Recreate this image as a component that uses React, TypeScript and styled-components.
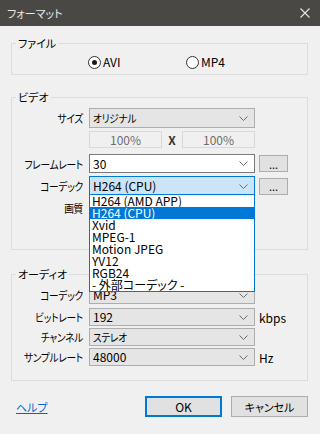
import * as React from "react";
import styled, { createGlobalStyle } from "styled-components";

const GlobalStyle = createGlobalStyle`
  html, body {
    margin: 0;
    padding: 0;
    background: #f0f0f0;
  }
  body {
    font-family: "Noto Sans CJK JP", "Noto Sans", sans-serif;
    font-size: 12px;
    font-feature-settings: "palt";
    color: #000;
  }
`;

const codecs = [
  "H264 (AMD APP)",
  "H264 (CPU)",
  "Xvid",
  "MPEG-1",
  "Motion JPEG",
  "YV12",
  "RGB24",
  "- 外部コーデック -",
];

const Chevron = () => (
  <svg width="9" height="5" viewBox="0 0 9 5">
    <path d="M0.5 0.5 L4.5 4.5 L8.5 0.5" fill="none" stroke="#6a6a6a" strokeWidth="1" />
  </svg>
);

interface ComboProps {
  value: string;
  variant?: "list" | "edit" | "focus";
  jp?: boolean;
  withList?: boolean;
}

function Combo(props: ComboProps) {
  return (
    <ComboBox $variant={props.variant || "list"}>
      <ComboText $jp={props.jp}>{props.value}</ComboText>
      <Chevron />
      {props.withList && (
        <DropList>
          {codecs.map((c) => (
            <DropItem key={c} $selected={c === "H264 (CPU)"}>
              {c}
            </DropItem>
          ))}
        </DropList>
      )}
    </ComboBox>
  );
}

export default function App() {
  return (
    <>
      <GlobalStyle />
      <Window>
        <TitleBar>
          <span>フォーマット</span>
          <svg width="10" height="10" viewBox="0 0 10 10">
            <path d="M0.5 0.5 L9.5 9.5 M9.5 0.5 L0.5 9.5" stroke="#e6e6e6" strokeWidth="1.1" />
          </svg>
        </TitleBar>
        <Body>
          <Group $pt={5} $pb={5}>
            <Legend>ファイル</Legend>
            <RadioRow>
              <Radio>
                <RadioCircle $checked />
                AVI
              </Radio>
              <Radio>
                <RadioCircle />
                MP4
              </Radio>
            </RadioRow>
          </Group>

          <Group $pt={4} $pb={0} $mt={15}>
            <Legend>ビデオ</Legend>
            <Row $h={20}>
              <Label>サイズ</Label>
              <Combo value="オリジナル" jp />
            </Row>
            <Row $h={17} $mt={3}>
              <Label />
              <PercentBox>100%</PercentBox>
              <Times>X</Times>
              <PercentBox>100%</PercentBox>
            </Row>
            <Row $h={19} $mt={6}>
              <Label>フレームレート</Label>
              <Combo value="30" variant="edit" />
              <DotsButton>...</DotsButton>
            </Row>
            <Row $h={20} $mt={3} $top>
              <Label>コーデック</Label>
              <Combo value="H264 (CPU)" variant="focus" withList />
              <DotsButton>...</DotsButton>
            </Row>
            <QualityRow>
              <Label>画質</Label>
            </QualityRow>
          </Group>

          <Group $pt={5} $pb={14} $mt={17}>
            <Legend>オーディオ</Legend>
            <Row $h={18}>
              <Label>コーデック</Label>
              <Combo value="MP3" />
            </Row>
            <Row $h={18} $mt={4}>
              <Label>ビットレート</Label>
              <Combo value="192" />
              <Unit>kbps</Unit>
            </Row>
            <Row $h={18} $mt={2}>
              <Label>チャンネル</Label>
              <Combo value="ステレオ" jp />
            </Row>
            <Row $h={18} $mt={2}>
              <Label>サンプルレート</Label>
              <Combo value="48000" />
              <Unit>Hz</Unit>
            </Row>
          </Group>

          <Footer>
            <HelpLink href="#">ヘルプ</HelpLink>
            <Buttons>
              <Button $primary>OK</Button>
              <Button $jp>キャンセル</Button>
            </Buttons>
          </Footer>
        </Body>
      </Window>
    </>
  );
}

const Window = styled.div`
  width: 320px;
  height: 434px;
  display: flex;
  flex-direction: column;
  background: #f0f0f0;
  overflow: hidden;
`;

const TitleBar = styled.div`
  height: 26px;
  flex: none;
  display: flex;
  align-items: center;
  justify-content: space-between;
  padding: 0 10px 0 7px;
  background: #4a4845;
  color: #e8e8e8;
  font-size: 11px;
  line-height: 14px;
`;

const Body = styled.div`
  padding: 10px 12px 0 11px;
  display: flex;
  flex-direction: column;
`;

const Group = styled.fieldset<{ $pt: number; $pb: number; $mt?: number }>`
  margin: ${(p) => p.$mt || 0}px 0 0 0;
  padding: ${(p) => p.$pt}px 0 ${(p) => p.$pb}px 0;
  border: 1px solid #dcdcdc;
  min-width: 0;
`;

const Legend = styled.legend`
  margin-left: 4px;
  padding: 0 2px;
  line-height: 14px;
  font-size: 11px;
`;

const RadioRow = styled.div`
  display: flex;
  align-items: center;
  height: 14px;
  padding-left: 76px;
`;

const Radio = styled.label`
  display: flex;
  align-items: center;
  gap: 2px;
  width: 98px;
  line-height: 14px;
`;

const RadioCircle = styled.span<{ $checked?: boolean }>`
  box-sizing: border-box;
  width: 13px;
  height: 13px;
  border: 1px solid #333;
  border-radius: 50%;
  background: #fff;
  display: flex;
  align-items: center;
  justify-content: center;
  &::after {
    content: "";
    width: 5px;
    height: 5px;
    border-radius: 50%;
    background: ${(p) => (p.$checked ? "#1a1a1a" : "transparent")};
  }
`;

const Row = styled.div<{ $h: number; $mt?: number; $top?: boolean }>`
  display: flex;
  align-items: center;
  height: ${(p) => p.$h}px;
  margin-top: ${(p) => p.$mt || 0}px;
  position: relative;
  z-index: ${(p) => (p.$top ? 2 : 1)};
`;

const Label = styled.span`
  flex: none;
  width: 71px;
  margin-right: 6px;
  display: flex;
  justify-content: flex-end;
  white-space: nowrap;
  font-size: 11px;
  letter-spacing: -0.3px;
  line-height: 14px;
  transform: scaleX(0.88);
  transform-origin: right center;
`;

const ComboBox = styled.div<{ $variant: "list" | "edit" | "focus" }>`
  position: relative;
  box-sizing: border-box;
  width: 166px;
  height: 100%;
  display: flex;
  align-items: center;
  padding: 0 6px 0 3px;
  border: 1px solid
    ${(p) => (p.$variant === "focus" ? "#0078d7" : p.$variant === "edit" ? "#7a7a7a" : "#adadad")};
  background: ${(p) => (p.$variant === "focus" ? "#cce4f7" : p.$variant === "edit" ? "#fff" : "#e5e5e5")};
`;

const ComboText = styled.span<{ $jp?: boolean }>`
  flex: 1;
  font-size: ${(p) => (p.$jp ? 11 : 12)}px;
  letter-spacing: ${(p) => (p.$jp ? "-0.3px" : "0")};
  line-height: 14px;
  white-space: nowrap;
  transform: ${(p) => (p.$jp ? "scaleX(0.88)" : "none")};
  transform-origin: left center;
`;

const DropList = styled.div`
  position: absolute;
  left: -1px;
  right: -1px;
  top: 100%;
  margin-top: -1px;
  box-sizing: border-box;
  border: 1px solid #0078d7;
  background: #fff;
  display: flex;
  flex-direction: column;
`;

const DropItem = styled.div<{ $selected?: boolean }>`
  height: 12px;
  line-height: 12px;
  padding-left: 2px;
  white-space: nowrap;
  background: ${(p) => (p.$selected ? "#0078d7" : "transparent")};
  color: ${(p) => (p.$selected ? "#fff" : "#000")};
`;

const PercentBox = styled.div`
  box-sizing: border-box;
  width: 73px;
  height: 100%;
  display: flex;
  align-items: center;
  justify-content: center;
  border: 1px solid #d9d9d9;
  background: #f0f0f0;
  color: #6d6d6d;
`;

const Times = styled.span`
  width: 20px;
  text-align: center;
  font-weight: bold;
  color: #333;
`;

const DotsButton = styled.div`
  box-sizing: border-box;
  width: 29px;
  height: 17px;
  margin-left: 4px;
  display: flex;
  align-items: center;
  justify-content: center;
  border: 1px solid #adadad;
  background: #e1e1e1;
  font-size: 11px;
  line-height: 10px;
`;

const QualityRow = styled.div`
  height: 48px;
  padding-top: 5px;
  display: flex;
  align-items: flex-start;
`;

const Unit = styled.span`
  margin-left: 4px;
`;

const Footer = styled.div`
  margin-top: 15px;
  display: flex;
  align-items: center;
  justify-content: space-between;
  padding-left: 5px;
`;

const HelpLink = styled.a`
  color: #0066cc;
  font-size: 11px;
  text-decoration: underline;
`;

const Buttons = styled.div`
  display: flex;
  gap: 9px;
`;

const Button = styled.div<{ $primary?: boolean; $jp?: boolean }>`
  box-sizing: border-box;
  width: 77px;
  height: 21px;
  display: flex;
  align-items: center;
  justify-content: center;
  font-size: ${(p) => (p.$jp ? 11 : 12)}px;
  background: #e1e1e1;
  border: ${(p) => (p.$primary ? "2px solid #0078d7" : "1px solid #adadad")};
`;
